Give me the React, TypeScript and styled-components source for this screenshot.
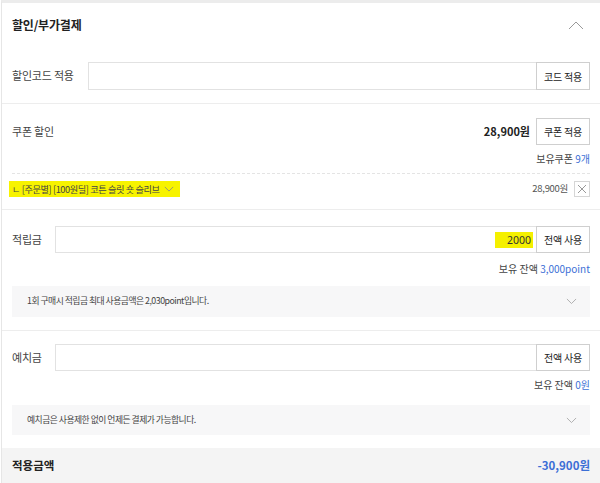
import styled, { createGlobalStyle } from "styled-components";

const GlobalStyle = createGlobalStyle`
  html, body {
    margin: 0;
    padding: 0;
    background: #fff;
  }
  body {
    font-family: "Noto Sans CJK KR", "Noto Sans", sans-serif;
    color: #333;
    line-height: 1.2;
  }
  * { box-sizing: border-box; }
`;

const BLUE = "#3c6fd6";

function ChevronUp() {
  return (
    <svg width="16" height="9" viewBox="0 0 16 9">
      <polyline points="1,8 8,1 15,8" fill="none" stroke="#999" strokeWidth="1" />
    </svg>
  );
}

function ChevronDown({ color = "#aaa", size = 11 }: { color?: string; size?: number }) {
  return (
    <svg width={size} height={size / 2 + 1} viewBox="0 0 12 7">
      <polyline points="1,1 6,6 11,1" fill="none" stroke={color} strokeWidth="1" />
    </svg>
  );
}

export default function App() {
  return (
    <>
      <GlobalStyle />
      <Panel>
        <Header>
          <Title>할인/부가결제</Title>
          <IconSlot>
            <ChevronUp />
          </IconSlot>
        </Header>

        <CodeRow>
          <Label $width={76}>할인코드 적용</Label>
          <Input $h={28} />
          <Button $h={28}>코드 적용</Button>
        </CodeRow>

        <Section $top={14} $bottom={12}>
          <CouponRow>
            <Label>쿠폰 할인</Label>
            <Price>28,900원</Price>
            <Button $h={27}>쿠폰 적용</Button>
          </CouponRow>
          <Balance $mt={7}>
            보유쿠폰 <Blue>9개</Blue>
          </Balance>
          <Dashed />
          <ItemRow>
            <Highlight>
              ㄴ [주문별] [100원딜] 코튼 슬릿 숏 슬리브
              <ChevronDown color="#888" size={10} />
            </Highlight>
            <ItemPrice>28,900원</ItemPrice>
            <CloseBox>
              <svg width="10" height="10" viewBox="0 0 10 10">
                <path d="M1 1 L9 9 M9 1 L1 9" stroke="#999" strokeWidth="1" />
              </svg>
            </CloseBox>
          </ItemRow>
        </Section>

        <Section $top={16} $bottom={13}>
          <InputRow>
            <Label $width={43}>적립금</Label>
            <Input $h={27}>
              <Marked>2000</Marked>
            </Input>
            <Button $h={27}>전액 사용</Button>
          </InputRow>
          <Balance $mt={9}>
            보유 잔액 <Blue>3,000point</Blue>
          </Balance>
          <InfoBox $mt={10} $h={31}>
            1회 구매시 적립금 최대 사용금액은 2,030point입니다.
            <ChevronDown />
          </InfoBox>
        </Section>

        <Section $top={13} $bottom={13} $last>
          <InputRow>
            <Label $width={43}>예치금</Label>
            <Input $h={27} />
            <Button $h={27}>전액 사용</Button>
          </InputRow>
          <Balance $mt={7}>
            보유 잔액 <Blue>0원</Blue>
          </Balance>
          <InfoBox $mt={13} $h={30}>
            예치금은 사용제한 없이 언제든 결제가 가능합니다.
            <ChevronDown />
          </InfoBox>
        </Section>

        <Total>
          <TotalLabel>적용금액</TotalLabel>
          <TotalValue>-30,900원</TotalValue>
        </Total>
      </Panel>
    </>
  );
}

const Panel = styled.div`
  width: 599px;
  height: 483px;
  border-top: 3px solid #ececec;
  border-left: 1px solid #e6e6e6;
  margin-left: 1px;
  overflow: hidden;
`;

const Header = styled.div`
  display: flex;
  align-items: center;
  justify-content: space-between;
  height: 47px;
  padding: 0 16px 3px 10px;
`;

const Title = styled.h2`
  margin: 0;
  font-size: 12px;
  font-weight: 700;
  color: #222;
  letter-spacing: -0.2px;
`;

const IconSlot = styled.span`
  display: flex;
`;

const CodeRow = styled.div`
  display: flex;
  align-items: center;
  padding: 12px 10px 13px 10px;
  border-bottom: 1px solid #ededed;
`;

const Section = styled.div<{ $top: number; $bottom: number; $last?: boolean }>`
  padding: ${(p) => p.$top}px 10px ${(p) => p.$bottom}px 10px;
  border-bottom: ${(p) => (p.$last ? "none" : "1px solid #ededed")};
`;

const Label = styled.span<{ $width?: number }>`
  flex: 0 0 ${(p) => (p.$width ? `${p.$width}px` : "auto")};
  font-size: 11px;
  color: #444;
  white-space: nowrap;
  letter-spacing: -0.2px;
`;

const Input = styled.div<{ $h: number }>`
  flex: 1;
  height: ${(p) => p.$h}px;
  border: 1px solid #e2e2e2;
  border-right: none;
  display: flex;
  align-items: center;
  justify-content: flex-end;
  padding-right: 3px;
`;

const Marked = styled.span`
  background: #f5f000;
  font-size: 10.5px;
  line-height: 14px;
  color: #333;
  padding: 1px 2px 1px 12px;
  font-family: "Noto Sans", sans-serif;
`;

const Button = styled.button<{ $h: number }>`
  flex: 0 0 54px;
  height: ${(p) => p.$h}px;
  border: 1px solid #cfcfcf;
  background: #fff;
  font-family: inherit;
  font-size: 10px;
  letter-spacing: -0.2px;
  color: #222;
  padding: 0;
  cursor: pointer;
`;

const InputRow = styled.div`
  display: flex;
  align-items: center;
`;

const CouponRow = styled.div`
  display: flex;
  align-items: center;
  height: 27px;
  & > ${Label} {
    flex: 1;
  }
`;

const Price = styled.span`
  font-size: 11px;
  font-weight: 700;
  color: #222;
  margin-right: 6px;
`;

const Balance = styled.div<{ $mt: number }>`
  margin-top: ${(p) => p.$mt}px;
  text-align: right;
  font-size: 10px;
  line-height: 14px;
  color: #444;
`;

const Blue = styled.span`
  color: ${BLUE};
`;

const Dashed = styled.div`
  margin-top: 7px;
  border-top: 1px dashed #e4e4e4;
`;

const ItemRow = styled.div`
  display: flex;
  align-items: center;
  margin-top: 7px;
  height: 16px;
`;

const Highlight = styled.span`
  display: flex;
  align-items: center;
  gap: 4px;
  background: #f7f300;
  margin-left: -3px;
  padding: 1px 6px 1px 3px;
  font-size: 9.2px;
  line-height: 14px;
  color: #444;
  letter-spacing: -0.4px;
  white-space: nowrap;
`;

const ItemPrice = styled.span`
  margin-left: auto;
  font-size: 9.5px;
  color: #555;
  letter-spacing: -0.3px;
`;

const CloseBox = styled.span`
  display: flex;
  align-items: center;
  justify-content: center;
  width: 16px;
  height: 16px;
  border: 1px solid #d6d6d6;
  margin-left: 6px;
`;

const InfoBox = styled.div<{ $mt: number; $h: number }>`
  margin-top: ${(p) => p.$mt}px;
  height: ${(p) => p.$h}px;
  background: #f7f7f8;
  display: flex;
  align-items: center;
  justify-content: space-between;
  padding: 0 13px 0 15px;
  font-size: 8.8px;
  color: #444;
  letter-spacing: -0.5px;
`;

const Total = styled.div`
  display: flex;
  align-items: center;
  justify-content: space-between;
  height: 36px;
  background: #f4f4f4;
  border-bottom: 1px solid #d8d8d8;
  padding: 0 10px 0 10px;
`;

const TotalLabel = styled.span`
  font-size: 11.5px;
  font-weight: 700;
  color: #222;
`;

const TotalValue = styled.span`
  font-size: 11.5px;
  font-weight: 700;
  color: ${BLUE};
`;
